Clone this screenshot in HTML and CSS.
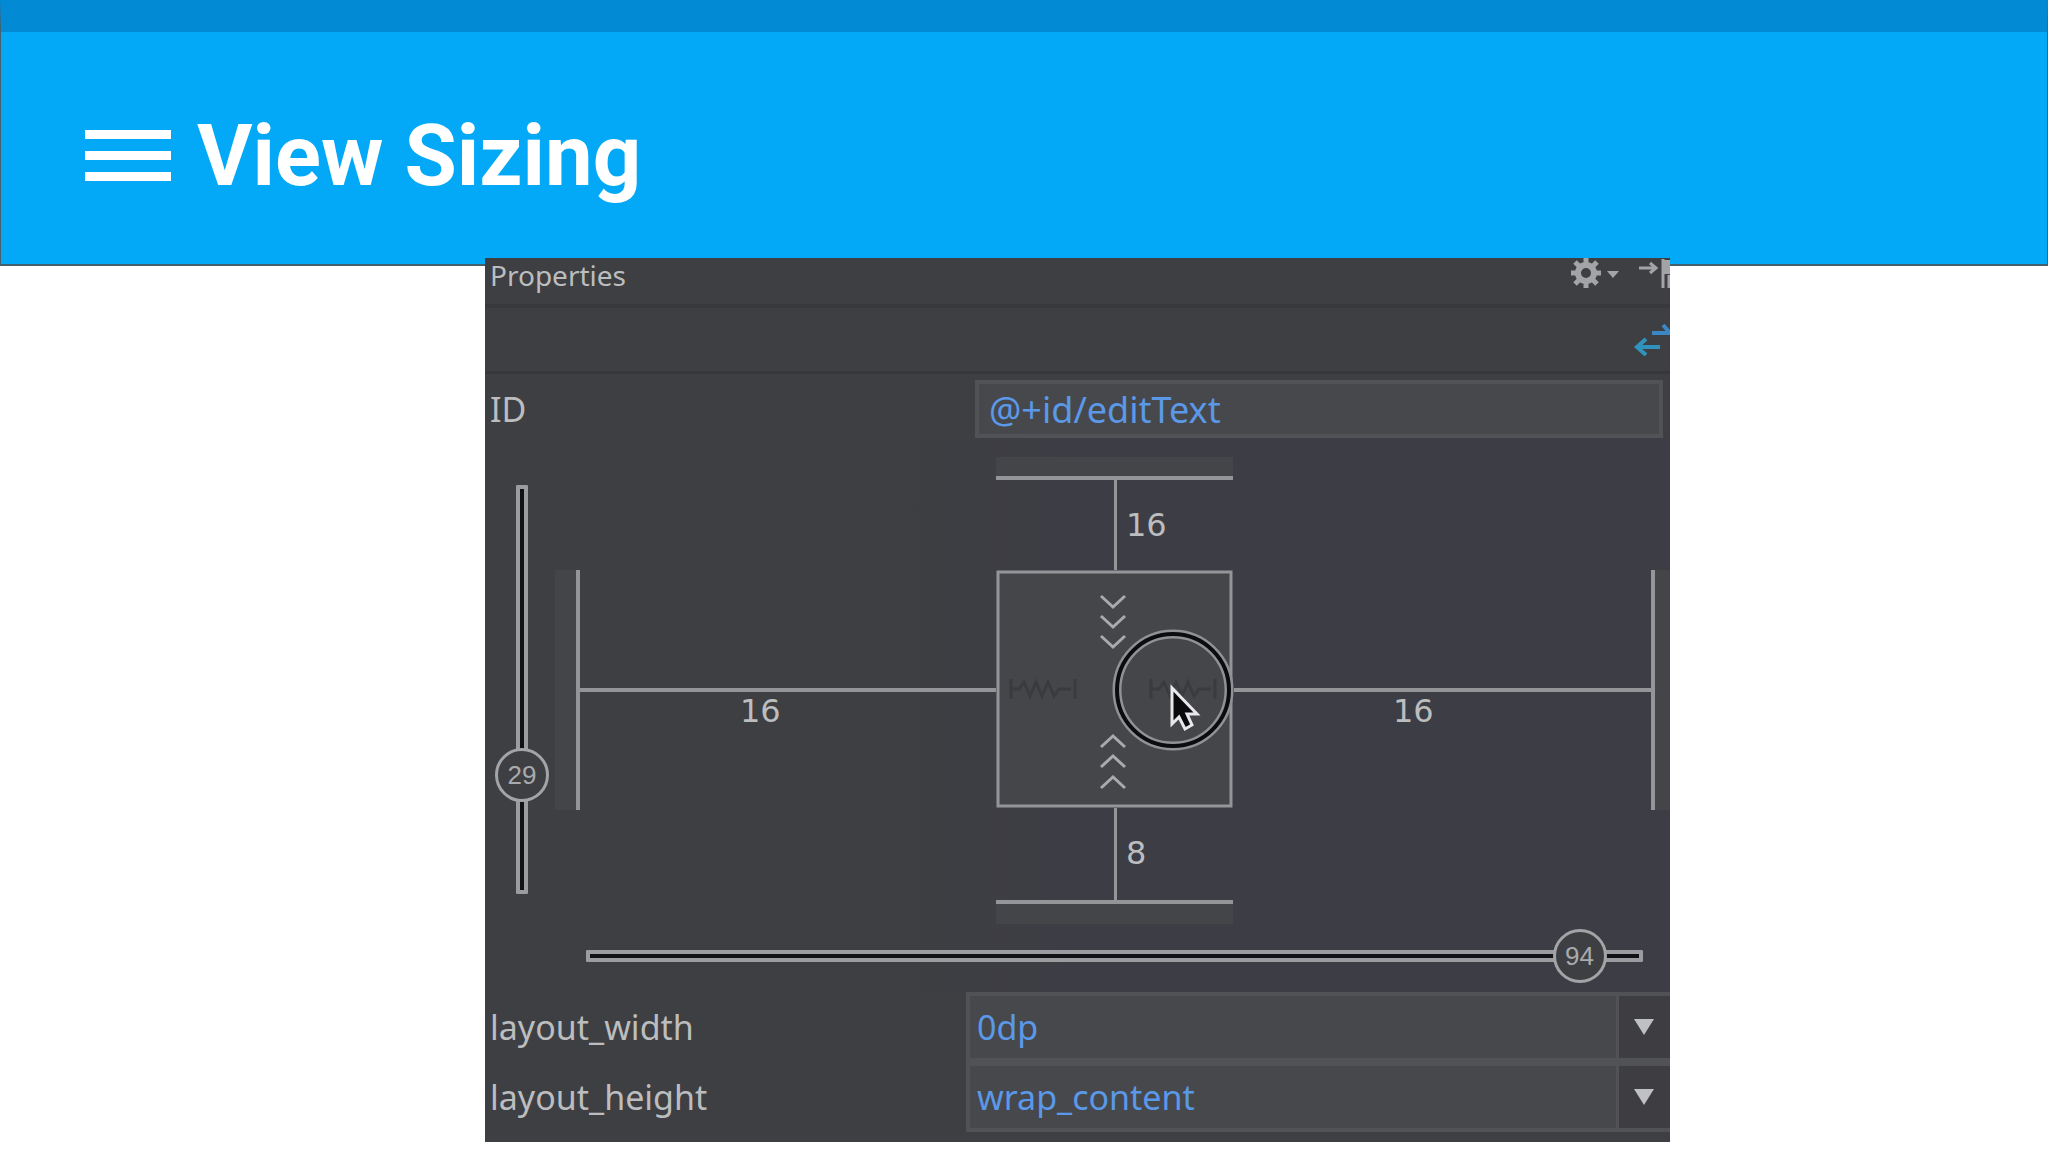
FILE: index.html
```
<!DOCTYPE html>
<html lang="en">
<head>
<meta charset="UTF-8">
<meta name="viewport" content="width=device-width, initial-scale=1.0">
<title>View Sizing</title>
<link rel="stylesheet" href="styles.css">
</head>
<body>
<header class="app-bar">
    <button type="button" class="menu-button" aria-label="Menu">
        <span></span>
        <span></span>
        <span></span>
    </button>
    <h1>View Sizing</h1>
</header>

<main class="properties">
    <div class="panel-title">
        <h2>Properties</h2>
        <button type="button" class="icon-button" aria-label="Settings">
            <svg width="50" height="32" viewBox="0 0 50 32">
                <circle cx="16" cy="15" r="8" fill="none" stroke="#a3a4a6" stroke-width="6"/>
                <path d="M16 0v6M16 24v6M1 15h6M25 15h6M5 4l5 5M22 21l5 5M27 4l-5 5M10 21l-5 5" stroke="#a3a4a6" stroke-width="5"/>
                <path d="M37 13h12l-6 7z" fill="#a3a4a6"/>
            </svg>
        </button>
        <button type="button" class="icon-button" aria-label="Hide">
            <svg width="32" height="32" viewBox="0 0 32 32">
                <path d="M1 10h15M12 5l6 5-6 5" fill="none" stroke="#a3a4a6" stroke-width="3"/>
                <path d="M25 1v29M31 17v13" fill="none" stroke="#a3a4a6" stroke-width="3"/>
                <path d="M25 2h7v14h-7z" fill="#a3a4a6"/>
            </svg>
        </button>
    </div>
    <div class="panel-toolbar">
        <button type="button" class="icon-button" aria-label="View all properties">
            <svg width="36" height="32" viewBox="0 0 36 32">
                <path d="M18 9h18M29 1l7 8" fill="none" stroke="#3d86c6" stroke-width="4"/>
                <path d="M26 23H5M12 15l-9 8 9 8" fill="none" stroke="#3093bd" stroke-width="4"/>
            </svg>
        </button>
    </div>

    <div class="row id-row">
        <label for="viewId">ID</label>
        <input type="text" id="viewId" class="text-box" value="@+id/editText" spellcheck="false">
    </div>

    <div class="inspector">
        <div class="slider slider-vertical">
            <input type="range" min="0" max="100" value="29" aria-label="Vertical bias">
            <output style="top: 71%">29</output>
        </div>

        <svg class="constraints" viewBox="0 0 1115 467">
            <!-- parent edges -->
            <g fill="#444548">
                <rect x="0" y="113" width="22" height="240"/>
                <rect x="1100" y="113" width="15" height="240"/>
                <rect x="441" y="0" width="237" height="19"/>
                <rect x="441" y="447" width="237" height="20"/>
            </g>
            <g fill="#949598">
                <rect x="21" y="113" width="4" height="240"/>
                <rect x="1096" y="113" width="4" height="240"/>
                <rect x="441" y="19" width="237" height="4"/>
                <rect x="441" y="443" width="237" height="4"/>
                <!-- margins -->
                <rect x="24" y="231" width="417" height="4"/>
                <rect x="679" y="231" width="417" height="4"/>
                <rect x="559" y="23" width="3" height="90"/>
                <rect x="559" y="351" width="3" height="92"/>
            </g>
            <!-- view -->
            <rect x="443" y="115" width="233" height="234" fill="#45464a" stroke="#949598" stroke-width="3"/>
            <g fill="none" stroke="#3a3b3f" stroke-width="3">
                <path d="M456 222v20M456 232h8l5-7 6 14 6-14 6 14 6-14 6 14 5-7h12M520 222v20"/>
                <path d="M596 222v20M596 232h8l5-7 6 14 6-14 6 14 6-14 6 14 5-7h12M660 222v20"/>
            </g>
            <g fill="none" stroke="#a9aaad" stroke-width="3">
                <path d="M546 139l12 11 12-11M546 159l12 11 12-11M546 179l12 11 12-11"/>
                <path d="M546 290l12-11 12 11M546 310l12-11 12 11M546 331l12-11 12 11"/>
            </g>
            <g class="margin-value">
                <text x="571" y="79">16</text>
                <text x="571" y="407">8</text>
                <text x="185" y="265">16</text>
                <text x="838" y="265">16</text>
            </g>
            <!-- pointer -->
            <circle cx="618" cy="233" r="56" fill="none" stroke="#909194" stroke-width="9"/>
            <circle cx="618" cy="233" r="56" fill="none" stroke="#0c0c0e" stroke-width="4"/>
            <path d="M617 231v36l7-7 6 12 7-4-5-11h10z" fill="#0a0a0c" stroke="#e8e8ea" stroke-width="3"/>
        </svg>

        <div class="slider slider-horizontal">
            <input type="range" min="0" max="100" value="94" aria-label="Horizontal bias">
            <output style="left: 94%">94</output>
        </div>
    </div>

    <div class="row">
        <label for="layoutWidth">layout_width</label>
        <div class="combo">
            <select id="layoutWidth">
                <option>0dp</option>
                <option>wrap_content</option>
            </select>
            <span class="combo-arrow"></span>
        </div>
    </div>
    <div class="row">
        <label for="layoutHeight">layout_height</label>
        <div class="combo">
            <select id="layoutHeight">
                <option>wrap_content</option>
                <option>0dp</option>
            </select>
            <span class="combo-arrow"></span>
        </div>
    </div>
</main>
</body>
</html>
```
FILE: styles.css
```
* {
    box-sizing: border-box;
}

body {
    margin: 0;
    background-color: #fff;
    font-family: "Noto Sans", "Open Sans", sans-serif;
}

button {
    background-color: transparent;
    border: none;
    padding: 0;
    cursor: pointer;
}

.app-bar {
    display: flex;
    align-items: center;
    gap: 26px;
    height: 266px;
    padding: 15px 84px 0;
    background-color: #03a9f7;
    border: 1px solid #45606e;
    border-top: 32px solid #028ad4;
    border-bottom-width: 2px;
}

.app-bar h1 {
    margin: 0;
    color: #fff;
    font-family: Roboto, sans-serif;
    font-size: 85px;
    font-weight: 700;
    line-height: 96px;
}

.menu-button {
    display: flex;
    flex-direction: column;
    gap: 12px;
    width: 86px;
}

.menu-button span {
    height: 9px;
    background-color: #fff;
}

.properties {
    margin: -8px 378px 0 485px;
    padding-bottom: 10px;
    background-color: #3e3f42;
    color: #bcbdbf;
}

.panel-title {
    display: flex;
    align-items: flex-start;
    gap: 18px;
    height: 50px;
    padding-left: 5px;
    border-bottom: 4px solid #38393c;
}

.panel-title h2 {
    flex: 1;
    margin: 0;
    font-size: 28px;
    font-weight: 400;
    line-height: 34px;
}

.icon-button svg {
    display: block;
}

.panel-toolbar {
    display: flex;
    justify-content: flex-end;
    align-items: center;
    height: 66px;
    border-bottom: 3px solid #37383b;
}

.row {
    display: grid;
    grid-template-columns: 481px 1fr;
    align-items: center;
    font-size: 34px;
    line-height: 48px;
}

.row label {
    padding-left: 5px;
}

.id-row {
    grid-template-columns: 490px 1fr;
    padding: 6px 7px 0 0;
}

.text-box,
.combo select {
    width: 100%;
    margin: 0;
    border: 4px solid #505256;
    border-radius: 0;
    outline: none;
    background-color: #46484b;
    color: #5b98e8;
    font: inherit;
}

.text-box {
    height: 58px;
    padding: 0 10px;
    font-size: 36px;
}

.inspector {
    display: grid;
    grid-template-columns: 70px 1fr;
    padding: 19px 0 30px;
    background-image: linear-gradient(to right, #3e3f42 35%, #3d3d45 50%);
}

.constraints {
    display: block;
    width: 100%;
}

.margin-value {
    fill: #bcbdbf;
    font-family: "DejaVu Sans", sans-serif;
    font-size: 32px;
}

.slider {
    position: relative;
    background-color: #111214;
    border-radius: 1px;
    box-shadow: inset 0 0 0 4px #9b9c9f;
}

.slider input {
    position: absolute;
    margin: 0;
    appearance: none;
    background: none;
    outline: none;
}

.slider input::-webkit-slider-thumb {
    appearance: none;
    width: 54px;
    height: 54px;
    border: 3px solid #a3a4a7;
    border-radius: 50%;
    background-color: #3e3f42;
}

.slider output {
    position: absolute;
    transform: translate(-50%, -50%);
    pointer-events: none;
    color: #a9aaad;
    font-family: "Liberation Sans", sans-serif;
    font-size: 26px;
    line-height: 26px;
}

.slider-vertical {
    width: 12px;
    margin: 28px 0 30px 31px;
}

.slider-vertical input {
    top: -27px;
    left: -21px;
    width: 54px;
    height: calc(100% + 54px);
    writing-mode: vertical-lr;
    direction: rtl;
}

.slider-vertical output {
    left: 50%;
}

.slider-horizontal {
    grid-column: 2;
    height: 12px;
    margin: 26px 27px 0 31px;
}

.slider-horizontal input {
    top: -21px;
    left: -27px;
    width: calc(100% + 54px);
    height: 54px;
}

.slider-horizontal output {
    top: 50%;
}

.combo {
    position: relative;
}

.combo select {
    display: block;
    height: 70px;
    padding: 0 60px 0 7px;
    border-right: none;
    appearance: none;
}

.combo-arrow {
    position: absolute;
    top: 4px;
    right: 0;
    bottom: 4px;
    display: flex;
    align-items: center;
    width: 54px;
    padding-left: 15px;
    border-left: 3px solid #505256;
    background-color: #3d3d42;
    pointer-events: none;
}

.combo-arrow::before {
    content: "";
    border: 10px solid transparent;
    border-top: 16px solid #bfc0c2;
    border-bottom: none;
}
```
